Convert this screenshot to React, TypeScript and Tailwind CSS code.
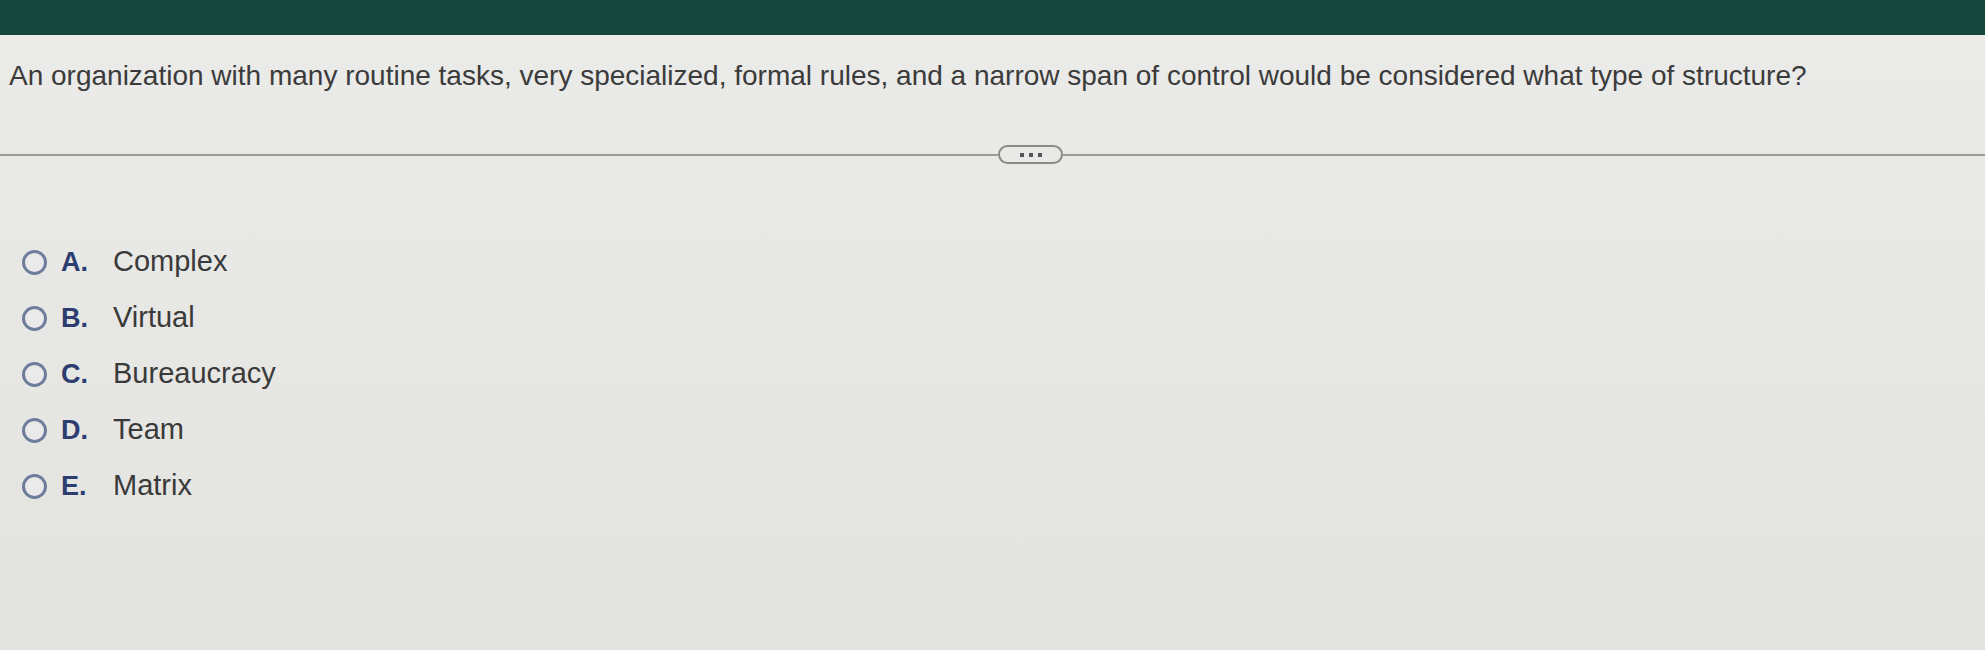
import React from 'react';

const options = [
  { letter: 'A.', text: 'Complex' },
  { letter: 'B.', text: 'Virtual' },
  { letter: 'C.', text: 'Bureaucracy' },
  { letter: 'D.', text: 'Team' },
  { letter: 'E.', text: 'Matrix' },
];

const App: React.FC = () => {
  return (
    <div className="min-h-[650px] w-full bg-gradient-to-b from-[#ebebe9] to-[#e3e3e0] font-['Liberation_Sans',Arial,sans-serif]">
      <div className="h-[35px] w-full bg-[#16463c]" />

      <p className="mt-[25px] pl-[9px] text-[28px] leading-[32px] text-[#3b3b3b]">
        An organization with many routine tasks, very specialized, formal rules, and a narrow span of control would be considered what type of structure?
      </p>

      <div className="mt-[53px] flex items-center">
        <div className="h-[2px] w-[998px] bg-[#9a9a98]" />
        <button className="flex h-[19px] w-[65px] items-center justify-center gap-[5px] rounded-full border-2 border-[#8a8a88] bg-[#e9e9e7]">
          <span className="h-[4px] w-[4px] bg-[#555]" />
          <span className="h-[4px] w-[4px] bg-[#555]" />
          <span className="h-[4px] w-[4px] bg-[#555]" />
        </button>
        <div className="h-[2px] flex-1 bg-[#9a9a98]" />
      </div>

      <div className="mt-[82px] flex flex-col gap-[24px] pl-[22px]">
        {options.map((o) => (
          <label key={o.letter} className="flex h-[32px] items-center">
            <span className="h-[25px] w-[25px] rounded-full border-[3px] border-[#6f7d9c] bg-[#eaeaea]" />
            <span className="ml-[14px] w-[52px] text-[27px] font-bold text-[#2d3d70]">{o.letter}</span>
            <span className="text-[29px] text-[#3a3a3a]">{o.text}</span>
          </label>
        ))}
      </div>
    </div>
  );
};

export default App;
